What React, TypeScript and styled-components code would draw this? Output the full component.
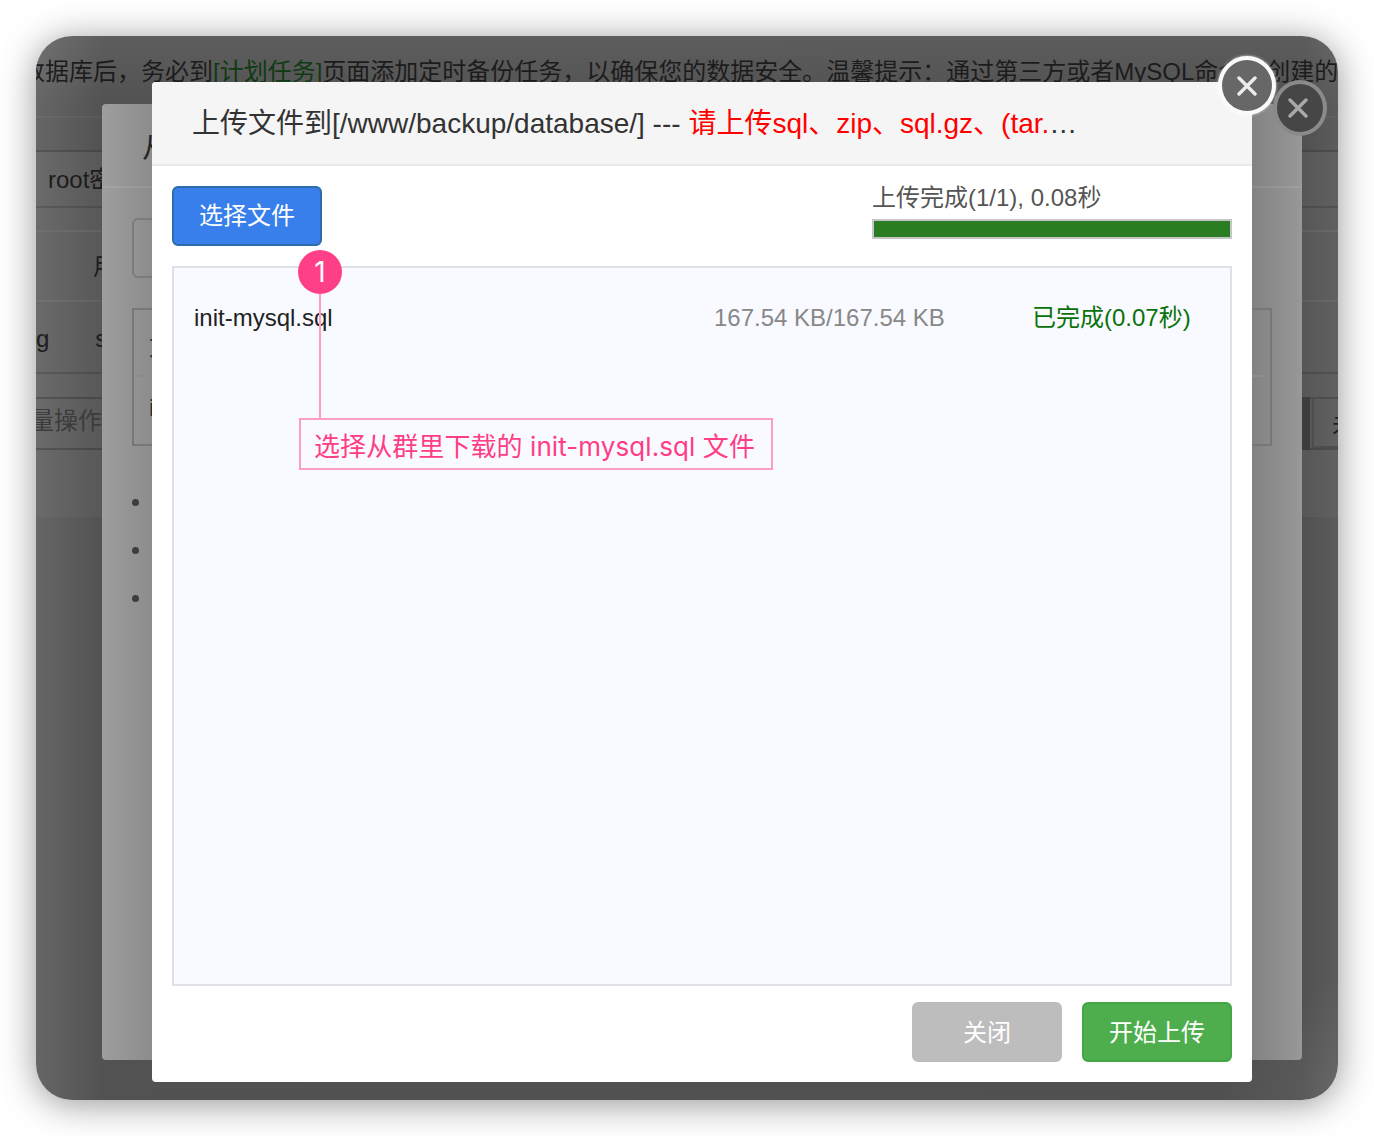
import styled, { createGlobalStyle } from 'styled-components';

const GlobalStyle = createGlobalStyle`
	* {
		box-sizing: border-box;
	}

	html,
	body {
		margin: 0;
		padding: 0;
		background: #fff;
	}

	body {
		font-family: 'Liberation Sans', 'Noto Sans CJK SC', sans-serif;
		font-size: 24px;
	}
`;

const CloseIcon = () => (
	<svg width='20' height='20' viewBox='0 0 20 20' fill='none'>
		<path d='M2 2 18 18M18 2 2 18' stroke='currentColor' strokeWidth='3.4' strokeLinecap='round' />
	</svg>
);

const App = () => {
	return (
		<Stage>
			<GlobalStyle />
			<Window>
				<Notice>
					<NoticeText>
						数据库后，务必到<NoticeLink>[计划任务]</NoticeLink>
						页面添加定时备份任务，以确保您的数据安全。温馨提示：通过第三方或者MySQL命令行创建的数据库
					</NoticeText>
				</Notice>
				<Panel>
					<FormRow $height={58} $top={32} $strong $pad={12} $lift={4}>
						root密码
					</FormRow>
					<FormRow $height={70} $top={22} $pad={57} $lift={2}>
						用户名
					</FormRow>
					<FormRow $height={74} $pad={0} $drop={4} $closed>
						g<ColumnText>s</ColumnText>
					</FormRow>
					<BatchRow>
						<BatchLabel>批量操作</BatchLabel>
						<BatchActions>
							<BatchEdge />
							<BatchButton>未</BatchButton>
						</BatchActions>
					</BatchRow>
				</Panel>

				<ImportDialog>
					<ImportHeader>从文件导入数据库</ImportHeader>
					<ImportBody>
						<ImportInput />
						<ImportTable>
							<ImportRow $height={65}>文件名称</ImportRow>
							<ImportRow $height={68}>init</ImportRow>
						</ImportTable>
						<ImportHints>
							<li />
							<li />
							<li />
						</ImportHints>
					</ImportBody>
					<BackClose>
						<CloseIcon />
					</BackClose>
				</ImportDialog>

				<UploadDialog>
					<UploadHeader>
						<UploadTitle>
							上传文件到[/www/backup/database/] --- <TitleNote>请上传sql、zip、sql.gz、(tar.gz)、文件</TitleNote>
						</UploadTitle>
					</UploadHeader>
					<UploadBody>
						<Toolbar>
							<SelectButton>选择文件</SelectButton>
							<Progress>
								<ProgressLabel>上传完成(1/1), 0.08秒</ProgressLabel>
								<ProgressTrack>
									<ProgressFill />
								</ProgressTrack>
							</Progress>
						</Toolbar>
						<FileList>
							<FileRow>
								<FileName>init-mysql.sql</FileName>
								<FileSize>167.54 KB/167.54 KB</FileSize>
								<FileStatus>已完成(0.07秒)</FileStatus>
							</FileRow>
						</FileList>
						<Footer>
							<FooterButton $bg='#bdbdbd' $line='#bdbdbd'>
								关闭
							</FooterButton>
							<FooterButton $bg='#4eae4d' $line='#45a545'>
								开始上传
							</FooterButton>
						</Footer>
					</UploadBody>
					<Callout>
						<CalloutBadge>1</CalloutBadge>
						<CalloutStem />
						<CalloutLabel>选择从群里下载的 init-mysql.sql 文件</CalloutLabel>
					</Callout>
					<FrontClose>
						<CloseIcon />
					</FrontClose>
				</UploadDialog>
			</Window>
		</Stage>
	);
};

export default App;

const Stage = styled.div`
	width: 1374px;
	height: 1136px;
	padding: 36px;
	overflow: hidden;
`;

const Window = styled.div`
	position: relative;
	width: 1302px;
	height: 1064px;
	border-radius: 36px;
	overflow: hidden;
	color: #1c1c1c;
	background:
		radial-gradient(circle 120px at 100% 100%, rgba(255, 255, 255, 0.08), transparent),
		linear-gradient(180deg, rgba(255, 255, 255, 0.07), transparent 70px),
		linear-gradient(90deg, #666666 0, #525252 66px, #505050 1266px, #5c5c5c 100%);
	box-shadow: 0 4px 36px rgba(0, 0, 0, 0.42);
`;

const Notice = styled.div`
	height: 82px;
	padding-top: 21px;
	border-bottom: 2px solid rgba(255, 255, 255, 0.04);
	overflow: hidden;
`;

const NoticeText = styled.div`
	margin-left: -15px;
	line-height: 30px;
	white-space: nowrap;
`;

const NoticeLink = styled.span`
	color: #0f3a12;
`;

const Panel = styled.div`
	height: 367px;
	background: rgba(255, 255, 255, 0.035);
`;

const FormRow = styled.div<{
	$height: number;
	$top?: number;
	$strong?: boolean;
	$closed?: boolean;
	$pad: number;
	$lift?: number;
	$drop?: number;
}>`
	display: flex;
	align-items: center;
	height: ${props => props.$height}px;
	margin-top: ${props => props.$top ?? 0}px;
	padding: ${props => props.$drop ?? 0}px 0 ${props => props.$lift ?? 0}px ${props => props.$pad}px;
	border-top: 2px solid ${props => (props.$strong ? 'rgba(0, 0, 0, 0.2)' : 'rgba(255, 255, 255, 0.05)')};
	border-bottom: 2px solid
		${props => (props.$strong || props.$closed ? 'rgba(0, 0, 0, 0.14)' : 'transparent')};
	white-space: nowrap;
`;

const ColumnText = styled.span`
	margin-left: 46px;
`;

const BatchRow = styled.div`
	display: flex;
	justify-content: space-between;
	height: 53px;
	margin-top: 23px;
	border-top: 2px solid rgba(0, 0, 0, 0.2);
	border-bottom: 2px solid rgba(0, 0, 0, 0.2);
`;

const BatchLabel = styled.span`
	margin-left: -30px;
	color: #3c3c3c;
	line-height: 43px;
	white-space: nowrap;
`;

const BatchActions = styled.div`
	display: flex;
	width: 36px;
	margin-top: -2px;
`;

const BatchEdge = styled.span`
	width: 8px;
	margin-bottom: -2px;
	background: #3d3d3d;
`;

const BatchButton = styled.span`
	flex: 1;
	margin-left: 2px;
	padding-left: 18px;
	line-height: 52px;
	overflow: hidden;
	white-space: nowrap;
	border: 2px solid #4d4d4d;
	border-right: none;
	color: #1e1e1e;
`;

const ImportDialog = styled.div`
	position: absolute;
	left: 66px;
	top: 68px;
	width: 1200px;
	height: 956px;
	border-radius: 4px;
	background: linear-gradient(90deg, #9e9e9e 0, #8c8c8c 50px, #7e7e7e 50%, #828282 1150px, #989898 100%);
`;

const ImportHeader = styled.div`
	height: 84px;
	padding: 22px 0 0 40px;
	border-bottom: 2px solid rgba(255, 255, 255, 0.08);
	font-size: 28px;
	color: #222;
	white-space: nowrap;
`;

const ImportBody = styled.div`
	padding: 30px 30px 0;
`;

const ImportInput = styled.div`
	width: 300px;
	height: 60px;
	border: 2px solid #7b7b7b;
	border-radius: 6px;
`;

const ImportTable = styled.div`
	height: 138px;
	margin-top: 30px;
	border: 2px solid #777;
`;

const ImportRow = styled.div<{ $height: number }>`
	height: ${props => props.$height}px;
	padding: 17px 0 0 15px;
	color: #2a2a2a;
	white-space: nowrap;

	& + & {
		border-top: 2px solid #8c8c8c;
	}
`;

const ImportHints = styled.ul`
	margin: 53px 0 0;
	padding: 0;
	list-style: none;

	li {
		width: 7px;
		height: 7px;
		margin-bottom: 41px;
		border-radius: 50%;
		background: #3d3d3d;
	}
`;

const RoundClose = styled.button`
	position: absolute;
	display: flex;
	align-items: center;
	justify-content: center;
	padding: 0;
	border-radius: 50%;
`;

const BackClose = styled(RoundClose)`
	right: -25px;
	top: -24px;
	width: 54px;
	height: 56px;
	padding-right: 4px;
	color: #a8a8a8;
	background: #464646;
	border: 4px solid #8a8a8a;
	filter: blur(0.6px);
`;

const FrontClose = styled(RoundClose)`
	right: -24px;
	top: -26px;
	width: 58px;
	height: 59px;
	color: #ececec;
	background: #676767;
	border: 4px solid #fafafa;
	box-shadow: 0 0 3px rgba(255, 255, 255, 0.8);
`;

const UploadDialog = styled.div`
	position: absolute;
	left: 116px;
	top: 46px;
	display: flex;
	flex-direction: column;
	width: 1100px;
	height: 1000px;
	border-radius: 4px;
	background: #fff;
`;

const UploadHeader = styled.div`
	display: flex;
	align-items: center;
	height: 84px;
	padding-left: 40px;
	background: #f5f5f5;
	border-bottom: 2px solid #e9e9e9;
	border-radius: 4px 4px 0 0;
`;

const UploadTitle = styled.div`
	width: 889px;
	padding-top: 2px;
	font-size: 28px;
	line-height: 80px;
	color: #333;
	white-space: nowrap;
	overflow: hidden;
	text-overflow: ellipsis;
`;

const TitleNote = styled.span`
	color: #ff0000;
`;

const UploadBody = styled.div`
	display: flex;
	flex: 1;
	flex-direction: column;
	padding: 20px 20px;
`;

const Toolbar = styled.div`
	display: flex;
	justify-content: space-between;
	height: 80px;
`;

const SelectButton = styled.button`
	width: 150px;
	height: 60px;
	padding: 0 0 6px;
	font: inherit;
	color: #fff;
	background: #387fec;
	border: 2px solid #2d6ca8;
	border-radius: 6px;
`;

const Progress = styled.div`
	width: 360px;
`;

const ProgressLabel = styled.div`
	height: 33px;
	line-height: 24px;
	color: #555;
	white-space: nowrap;
`;

const ProgressTrack = styled.div`
	height: 20px;
	border: 2px solid #c6c6c6;
`;

const ProgressFill = styled.div`
	height: 100%;
	background: #2a7d22;
`;

const FileList = styled.div`
	flex: 1;
	background: #f9faff;
	border: 2px solid #dfe1e8;
`;

const FileRow = styled.div`
	display: flex;
	padding: 35px 0 0 20px;
	line-height: 30px;
	white-space: nowrap;
`;

const FileName = styled.span`
	width: 520px;
	color: #222;
`;

const FileSize = styled.span`
	width: 318px;
	color: #888;
`;

const FileStatus = styled.span`
	color: #0a720a;
`;

const Footer = styled.div`
	display: flex;
	justify-content: flex-end;
	gap: 20px;
	margin-top: 16px;
`;

const FooterButton = styled.button<{ $bg: string; $line: string }>`
	width: 150px;
	height: 60px;
	padding: 0 0 4px;
	font: inherit;
	color: #fff;
	background: ${props => props.$bg};
	border: 2px solid ${props => props.$line};
	border-radius: 6px;
`;

const Callout = styled.div`
	position: absolute;
	left: 146px;
	top: 168px;
	display: flex;
	flex-direction: column;
	align-items: flex-start;
`;

const CalloutBadge = styled.span`
	width: 44px;
	height: 44px;
	font-family: Inter, 'Noto Sans CJK SC', sans-serif;
	font-size: 28px;
	line-height: 45px;
	text-align: center;
	color: #fff;
	background: #ff4088;
	border-radius: 50%;
`;

const CalloutStem = styled.span`
	width: 2px;
	height: 124px;
	margin-left: 21px;
	background: #ff9ec3;
`;

const CalloutLabel = styled.span`
	margin-left: 1px;
	padding: 0 16px 0 13px;
	height: 52px;
	font-family: Inter, 'Noto Sans CJK SC', sans-serif;
	font-size: 26px;
	letter-spacing: 0.08px;
	line-height: 54px;
	color: #ff3d85;
	border: 2px solid #ff9ec3;
	white-space: nowrap;
`;
